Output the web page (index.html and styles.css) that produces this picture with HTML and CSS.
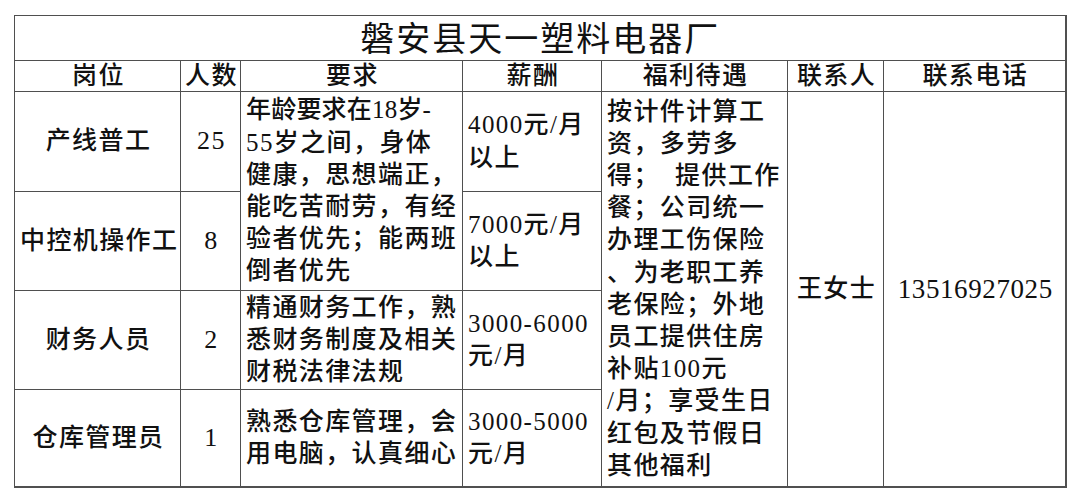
FILE: index.html
```html
<!DOCTYPE html>
<html lang="zh-CN">
<head>
<meta charset="utf-8">
<title>磐安县天一塑料电器厂</title>
<link rel="stylesheet" href="styles.css">
</head>
<body>
<div class="page">
  <table class="jobs">
    <colgroup>
      <col class="c-post">
      <col class="c-num">
      <col class="c-req">
      <col class="c-pay">
      <col class="c-perk">
      <col class="c-contact">
      <col class="c-phone">
    </colgroup>
    <tr class="r-title">
      <td class="title" colspan="7">磐安县天一塑料电器厂</td>
    </tr>
    <tr class="r-head">
      <th>岗位</th>
      <th>人数</th>
      <th>要求</th>
      <th>薪酬</th>
      <th>福利待遇</th>
      <th>联系人</th>
      <th>联系电话</th>
    </tr>
    <tr class="r-1">
      <td class="center">产线普工</td>
      <td class="center num">25</td>
      <td class="left" rowspan="2"><span class="tight">年龄要求在18岁-</span><br>55岁之间，身体<br>健康，思想端正，<br>能吃苦耐劳，有经<br>验者优先；能两班<br>倒者优先</td>
      <td class="left">4000元/月<br>以上</td>
      <td class="left perks" rowspan="4">按计件计算工<br>资，多劳多<br>得；&nbsp;&nbsp;提供工作<br>餐；公司统一<br>办理工伤保险<br>、为老职工养<br>老保险；外地<br>员工提供住房<br>补贴100元<br>/月；享受生日<br>红包及节假日<br>其他福利</td>
      <td class="center" rowspan="4">王女士</td>
      <td class="center phone" rowspan="4">13516927025</td>
    </tr>
    <tr class="r-2">
      <td class="center">中控机操作工</td>
      <td class="center num">8</td>
      <td class="left">7000元/月<br>以上</td>
    </tr>
    <tr class="r-3">
      <td class="center">财务人员</td>
      <td class="center num">2</td>
      <td class="left">精通财务工作，熟<br>悉财务制度及相关<br>财税法律法规</td>
      <td class="left">3000-6000<br>元/月</td>
    </tr>
    <tr class="r-4">
      <td class="center">仓库管理员</td>
      <td class="center num">1</td>
      <td class="left">熟悉仓库管理，会<br>用电脑，认真细心</td>
      <td class="left">3000-5000<br>元/月</td>
    </tr>
  </table>
</div>
</body>
</html>
```
FILE: styles.css
```css
html, body {
  margin: 0;
  padding: 0;
  background: #ffffff;
}

.page {
  padding: 15px 14px 0 14px;
}

.jobs {
  width: 1051px;
  table-layout: fixed;
  border-collapse: collapse;
  border-top: 1px solid #4a4a4a;
  border-left: 1px solid #4a4a4a;
  border-right: 2px solid #505050;
  border-bottom: 2px solid #505050;
  font-family: "Liberation Serif", "Noto Sans CJK SC", serif;
  font-size: 25px;
  letter-spacing: 1.4px;
  color: #111111;
}

.c-post { width: 166px; }
.c-num { width: 60px; }
.c-req { width: 222px; }
.c-pay { width: 139px; }
.c-perk { width: 186px; }
.c-contact { width: 96px; }
.c-phone { width: 182px; }

.jobs td,
.jobs th {
  border: 1px solid #4f4f4f;
  padding: 0 3px 0 5px;
  white-space: nowrap;
  overflow: visible;
  line-height: 32.2px;
  vertical-align: middle;
  font-weight: 500;
}

.r-title { height: 45px; }
.r-head { height: 31px; }
.r-1 { height: 100px; }
.r-2 { height: 99px; }
.r-3 { height: 99px; }
.r-4 { height: 97px; }

.jobs .title {
  text-align: center;
  font-size: 34px;
  font-weight: normal;
  letter-spacing: 2px;
  line-height: 40px;
  padding-top: 4px;
  padding-left: 4px;
}

.r-head th {
  text-align: center;
  line-height: 30px;
  padding: 0 0 0 2px;
}

.center {
  text-align: center;
}

.left {
  text-align: left;
}

.num {
  font-size: 26px;
}

.tight {
  letter-spacing: 0.2px;
}

.phone {
  font-size: 27px;
  letter-spacing: 0.6px;
}
```
